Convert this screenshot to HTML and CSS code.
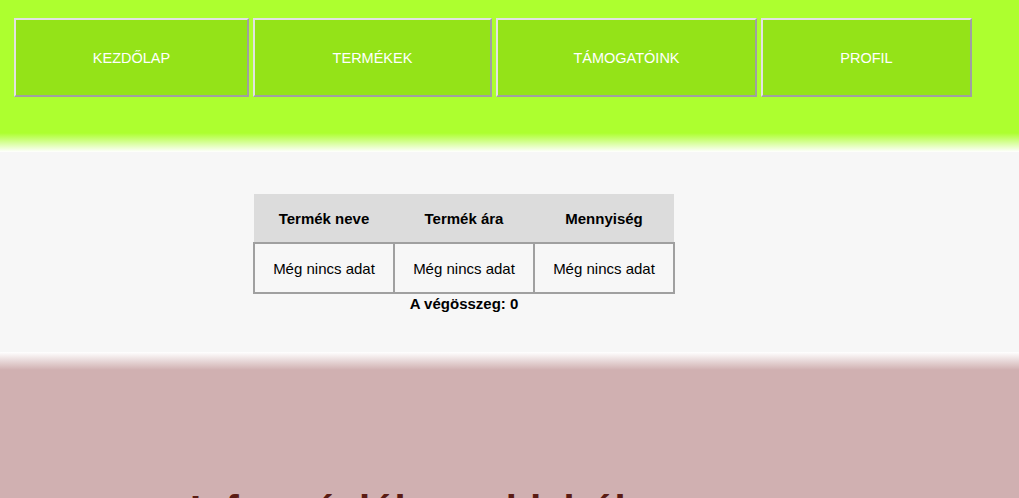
FILE: index.html
```html
<!DOCTYPE html>
<html lang="hu">
<head>
<meta charset="utf-8">
<title>Kosár</title>
<link rel="stylesheet" href="styles.css">
</head>
<body>
<header class="header">
  <nav class="nav">
    <button class="nav-btn nav-home">KEZDŐLAP</button>
    <button class="nav-btn nav-products">TERMÉKEK</button>
    <button class="nav-btn nav-sponsors">TÁMOGATÓINK</button>
    <button class="nav-btn nav-profile">PROFIL</button>
  </nav>
</header>
<main class="cart">
  <table class="cart-table">
    <thead>
      <tr><th>Termék neve</th><th>Termék ára</th><th>Mennyiség</th></tr>
    </thead>
    <tbody>
      <tr><td>Még nincs adat</td><td>Még nincs adat</td><td>Még nincs adat</td></tr>
    </tbody>
  </table>
  <p class="total">A végösszeg: 0</p>
</main>
<section class="info">
  <h2 class="info-title">Információk az oldalról</h2>
</section>
</body>
</html>
```
FILE: styles.css
```css
html, body {
  margin: 0;
  padding: 0;
}
body {
  font-family: "Liberation Sans", Arial, sans-serif;
  background: #d0b0b1;
}
.header {
  height: 152px;
  box-sizing: border-box;
  padding: 18px 14px 0;
  background: linear-gradient(to bottom, #adff2f 0, #adff2f 133px, #ffffff 152px);
}
.nav {
  display: flex;
  gap: 4px;
}
.nav-btn {
  height: 79px;
  box-sizing: border-box;
  padding: 0;
  margin: 0;
  background: #94e318;
  color: #ffffff;
  font-family: "Liberation Sans", Arial, sans-serif;
  font-size: 14.5px;
  border: 2px solid;
  border-color: #e2e2e2 #a0a0a0 #a0a0a0 #e2e2e2;
  cursor: pointer;
}
.nav-home { width: 235px; }
.nav-products { width: 239px; }
.nav-sponsors { width: 261px; }
.nav-profile { width: 211px; }
.cart {
  display: block;
  height: 200px;
  box-sizing: border-box;
  padding-top: 42px;
  background: #f7f7f7;
}
.cart-table {
  margin-left: 253px;
  border-collapse: collapse;
  font-size: 15px;
  color: #000;
}
.cart-table th {
  width: 138px;
  height: 48px;
  padding: 0;
  background: #dcdcdc;
  font-weight: bold;
}
.cart-table td {
  width: 138px;
  height: 48px;
  padding: 0;
  text-align: center;
  border: 2px solid #a0a0a0;
  background: #f7f7f7;
}
.total {
  width: 422px;
  margin: 1px 0 0 253px;
  text-align: center;
  font-size: 15px;
  font-weight: bold;
  line-height: 17px;
}
.info {
  min-height: 300px;
  padding-top: 136px;
  background: linear-gradient(to bottom, #ffffff 0, #d0b0b1 18px);
}
.info-title {
  margin: 0 0 0 190px;
  font-size: 40px;
  font-weight: bold;
  color: #5a1c14;
}
```
